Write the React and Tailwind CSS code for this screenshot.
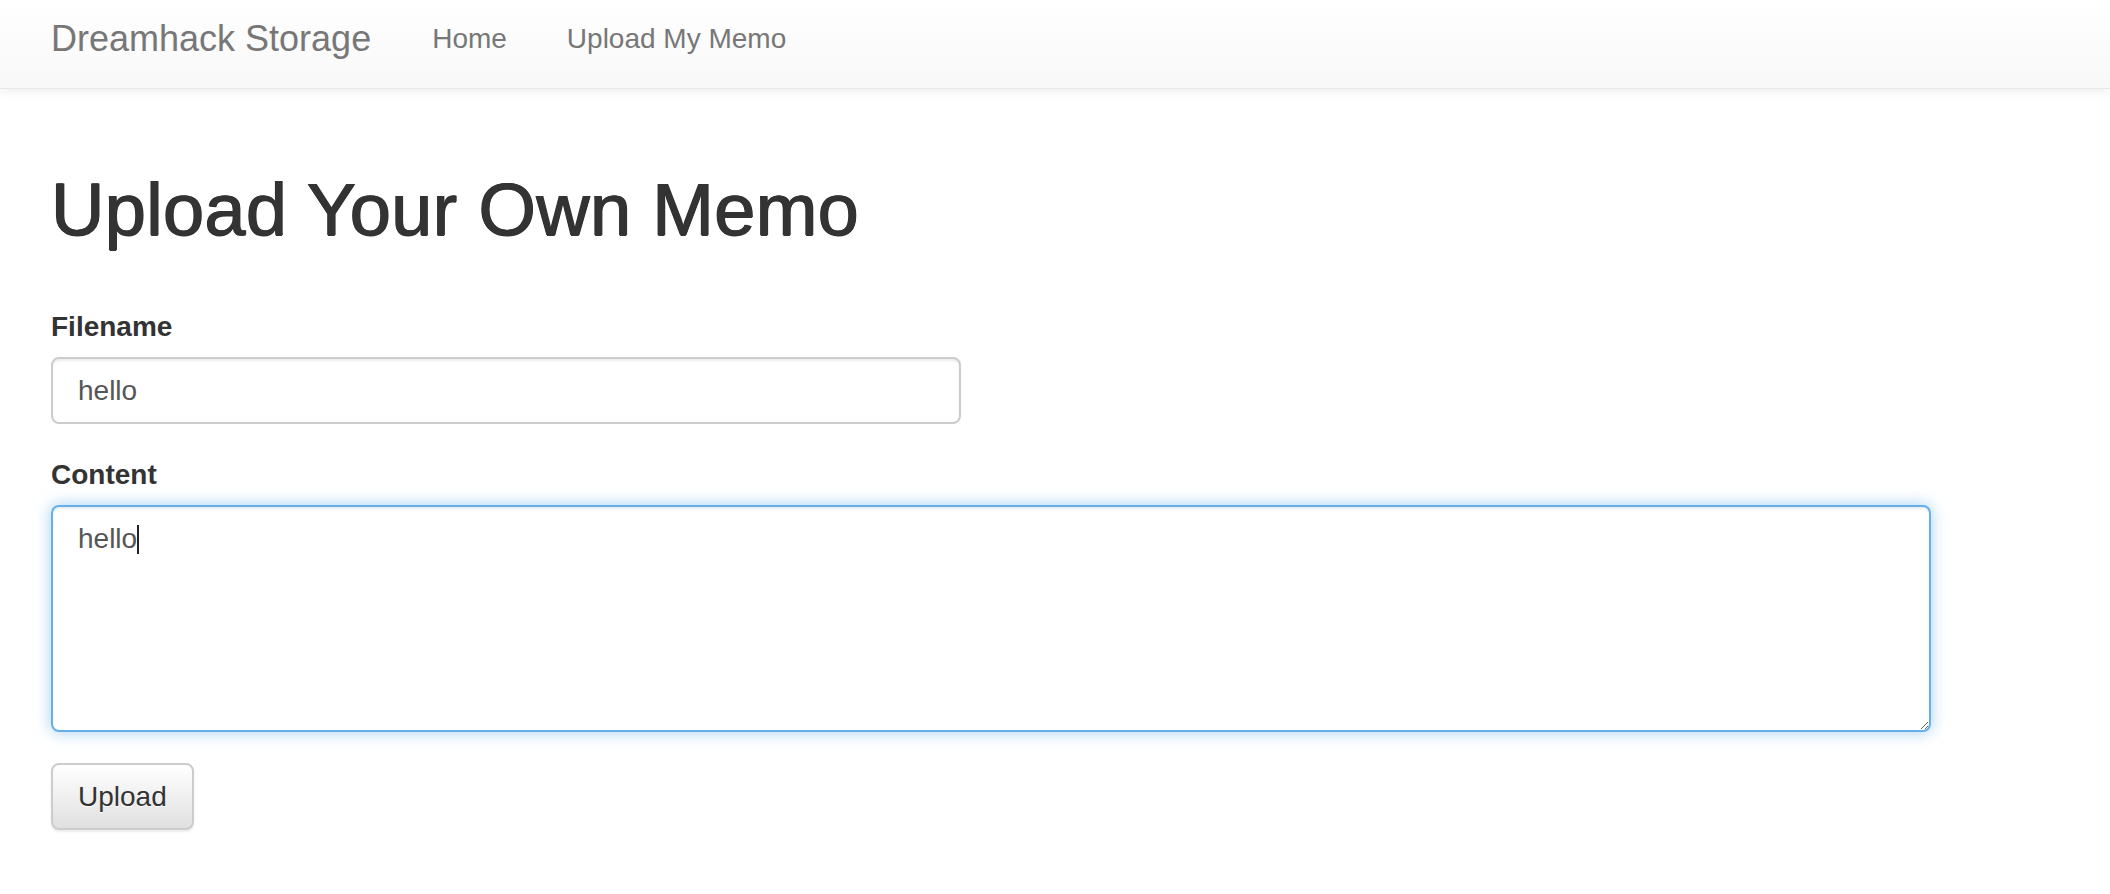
import React from 'react';

const Navbar = () => {
  return (
    <nav className="h-[89px] bg-gradient-to-b from-white to-[#f8f8f8] border-b border-[#e7e7e7] shadow-[0_2px_10px_rgba(0,0,0,0.075)]">
      <div className="h-full flex items-center pb-[11px] pl-[51px] text-[#777]">
        <span className="text-[36px] leading-none pr-[61px]">Dreamhack Storage</span>
        <span className="text-[28px] leading-none pr-[60px]">Home</span>
        <span className="text-[28px] leading-none">Upload My Memo</span>
      </div>
    </nav>
  );
};

const App = () => {
  return (
    <div
      className="min-h-screen bg-white text-[#333]"
      style={{ fontFamily: '"Liberation Sans", Arial, sans-serif' }}
    >
      <Navbar />
      <main className="pl-[51px] pt-[81px]">
        <h1 className="text-[74px] leading-[79px] font-normal tracking-[0.3px] [text-shadow:0.7px_0_0_#333,-0.7px_0_0_#333,0_0.6px_0_#333]">
          Upload Your Own Memo
        </h1>

        <form className="mt-[58px]" onSubmit={(e) => e.preventDefault()}>
          <div className="mb-[31px]">
            <label className="block text-[28px] leading-[40px] font-bold mb-[10px]">Filename</label>
            <input
              type="text"
              defaultValue="hello"
              readOnly
              className="block w-[910px] h-[67px] px-[25px] text-[28px] text-[#555] bg-white border-2 border-[#ccc] rounded-[8px] shadow-[inset_0_2px_2px_rgba(0,0,0,0.075)] outline-none"
            />
          </div>

          <div className="mb-[31px]">
            <label className="block text-[28px] leading-[40px] font-bold mb-[10px]">Content</label>
            <div className="relative w-[1880px]">
              <textarea
                defaultValue="hello"
                readOnly
                className="block w-[1880px] h-[227px] px-[25px] py-[12px] text-[28px] leading-[40px] text-[#555] bg-white border-2 border-[#66afe9] rounded-[8px] shadow-[inset_0_2px_2px_rgba(0,0,0,0.075),0_0_16px_rgba(102,175,233,0.6)] outline-none"
              />
              {/* text caret */}
              <span className="absolute left-[86px] top-[20px] w-[2px] h-[29px] bg-[#222]" />
            </div>
          </div>

          <button
            type="submit"
            className="h-[67px] px-[25px] text-[28px] text-[#333] border-2 border-[#ccc] rounded-[8px] bg-gradient-to-b from-white to-[#e0e0e0] shadow-[0_2px_2px_rgba(0,0,0,0.075)] [text-shadow:0_1px_0_#fff]"
          >
            Upload
          </button>
        </form>
      </main>
    </div>
  );
};

export default App;
